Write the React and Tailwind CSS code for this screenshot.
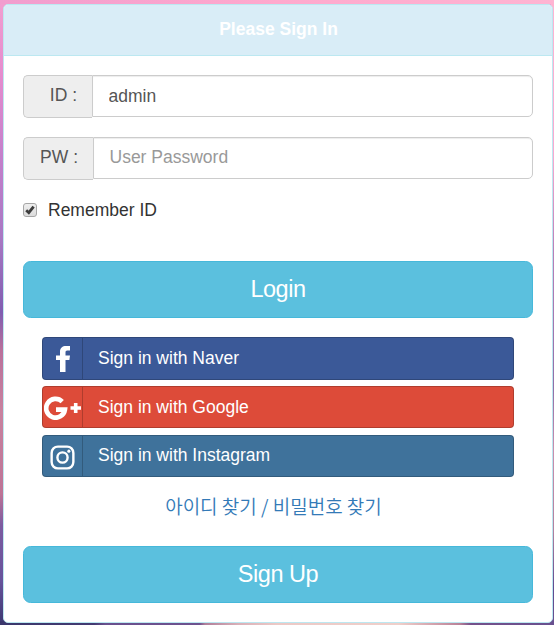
import React from "react";

const ff = "font-['Liberation_Sans','Noto_Sans_CJK_KR',sans-serif]";

function Field({ label, labelClass, children }) {
  return (
    <div className="flex h-[43px] items-start">
      <span className={"flex h-[43px] shrink-0 items-center justify-end rounded-l-[5px] border border-r-0 border-[#ccc] bg-[#eee] pr-[15px] pb-[3px] text-[#555] " + labelClass}>
        {label}
      </span>
      {children}
    </div>
  );
}

const inputClass =
  "h-[42px] min-w-0 flex-1 rounded-r-[5px] border border-[#ccc] bg-white px-[15.5px] text-[17.5px] text-[#555] outline-none placeholder:text-[#999] shadow-[inset_0_1px_1px_rgba(0,0,0,0.075)]";

function Social({ className, labelClass, children, label }) {
  return (
    <button className={"flex w-full items-stretch rounded-[4px] border border-black/20 text-left text-white " + className}>
      <span className="flex w-[40px] shrink-0 items-center justify-center border-r border-black/20">{children}</span>
      <span className={"flex items-center pl-[15px] " + labelClass}>{label}</span>
    </button>
  );
}

function BigButton({ children }) {
  return (
    <button className="block h-[57px] w-full rounded-[7.5px] border border-[#46b8da] bg-[#5bc0de] text-[23.5px] tracking-[-0.45px] text-white">
      {children}
    </button>
  );
}

export default function App() {
  return (
    <div className={"relative h-[625px] w-[554px] overflow-hidden bg-[linear-gradient(180deg,#f29fd0_0%,#e58cce_12%,#c480cb_25%,#a878c3_38%,#805db0_50%,#b9719b_56%,#c8829f_66%,#bd7496_79%,#7c5ba0_84%,#66539b_93%,#3b3770_100%)] pt-[4px] pl-[3px] text-[17.5px] text-[#333] " + ff}>
      <div className="absolute inset-x-0 top-0 h-[4px] bg-[linear-gradient(90deg,#f19dce,#ffa9cd_50%,#ffb4d2)]" />
      <div className="absolute top-0 right-0 h-full w-[3px] bg-[linear-gradient(180deg,#ffb4d2_0%,#f9a8d0_25%,#b97fb8_40%,#8f6fa8_62%,#c98fae_72%,#b0809f_85%,#5f4b91_94%,#68508f_100%)]" />
      <div className="absolute inset-x-0 bottom-0 h-[4px] bg-[linear-gradient(90deg,#3a376c_0%,#433b72_17%,#69508e_19%,#6d528f_36%,#b07f9a_37%,#d9b0b8_43%,#ecc9c6_50%,#efcfca_72%,#cf9da9_79%,#b98299_83%,#74518b_85%,#68508f_100%)]" />
      <div className="relative h-[619px] w-[550px] rounded-[5px] border border-[#bce8f1] bg-white">
        <div className="flex h-[51px] items-center justify-center rounded-t-[4px] border-b border-[#bce8f1] bg-[#d9edf7] pb-px pl-px font-bold text-white">
          Please Sign In
        </div>
        <div className="flex flex-col px-[19px] pt-[19px]">
          <Field label="ID :" labelClass="w-[69px]">
            <input className={inputClass} defaultValue="admin" />
          </Field>
          <div className="mt-[19px]">
            <Field label="PW :" labelClass="w-[70px]">
              <input className={inputClass + " pb-[2px]"} placeholder="User Password" />
            </Field>
          </div>
          <label className="mt-[17px] flex h-[26px] items-center">
            <span className="flex h-[14px] w-[14px] items-center justify-center rounded-[3px] border border-[#a6a6a6] bg-[linear-gradient(#eeeeee,#dcdcdc)]">
              <svg viewBox="0 0 12 12" className="h-[12px] w-[12px]">
                <path d="M2.2 6.3 4.8 8.7 9.6 2.6" fill="none" stroke="#3c3c3c" strokeWidth="2.8" />
              </svg>
            </span>
            <span className="ml-[11px]">Remember ID</span>
          </label>
          <div className="mt-[38px]">
            <BigButton>Login</BigButton>
          </div>
          <div className="mt-[19px] flex flex-col px-[19px]">
            <Social className="h-[43px] bg-[#3b5998]" labelClass="pb-px" label="Sign in with Naver">
              <svg viewBox="0 0 14 26" className="h-[26px] w-[14px]">
                <path fill="#fff" d="M14 0v4.400h-2.600c-1.500 0-1.900.8-1.900 2.100v3H14l-.6 4.500H9.500V26H4V14H0V9.500h4V5.600C4 2 6.500 0 10 0z" />
              </svg>
            </Social>
            <Social className="mt-[6px] h-[42px] bg-[#dd4b39]" labelClass="pt-px" label="Sign in with Google">
              <svg viewBox="0 0 37 24" className="mt-px h-[24px] w-[37px]">
                <path d="M18.200 5.600A9.400 9.400 0 1 0 20.900 13.600H12" fill="none" stroke="#fff" strokeWidth="4.700" />
                <path d="M26.500 12H37M31.700 7v10" stroke="#fff" strokeWidth="3.600" />
              </svg>
            </Social>
            <Social className="mt-[7px] h-[42px] bg-[#3f729b]" labelClass="pb-px" label="Sign in with Instagram">
              <svg viewBox="0 0 26 26" className="mt-[2px] h-[25px] w-[25px]">
                <rect x="1.700" y="1.700" width="22.600" height="22.600" rx="6.500" fill="none" stroke="#fff" strokeWidth="2.500" />
                <circle cx="13" cy="13" r="5.300" fill="none" stroke="#fff" strokeWidth="2.500" />
                <circle cx="19.600" cy="6.400" r="1.600" fill="#fff" />
              </svg>
            </Social>
          </div>
          <div className="mt-[17px] flex h-[25px] items-center justify-center pr-[9px] font-['Noto_Sans_CJK_KR',sans-serif] text-[19px] font-[350] whitespace-nowrap text-[#337ab7]">
            아이디 찾기 / 비밀번호 찾기
          </div>
          <div className="mt-[27px]">
            <BigButton>Sign Up</BigButton>
          </div>
        </div>
      </div>
    </div>
  );
}
